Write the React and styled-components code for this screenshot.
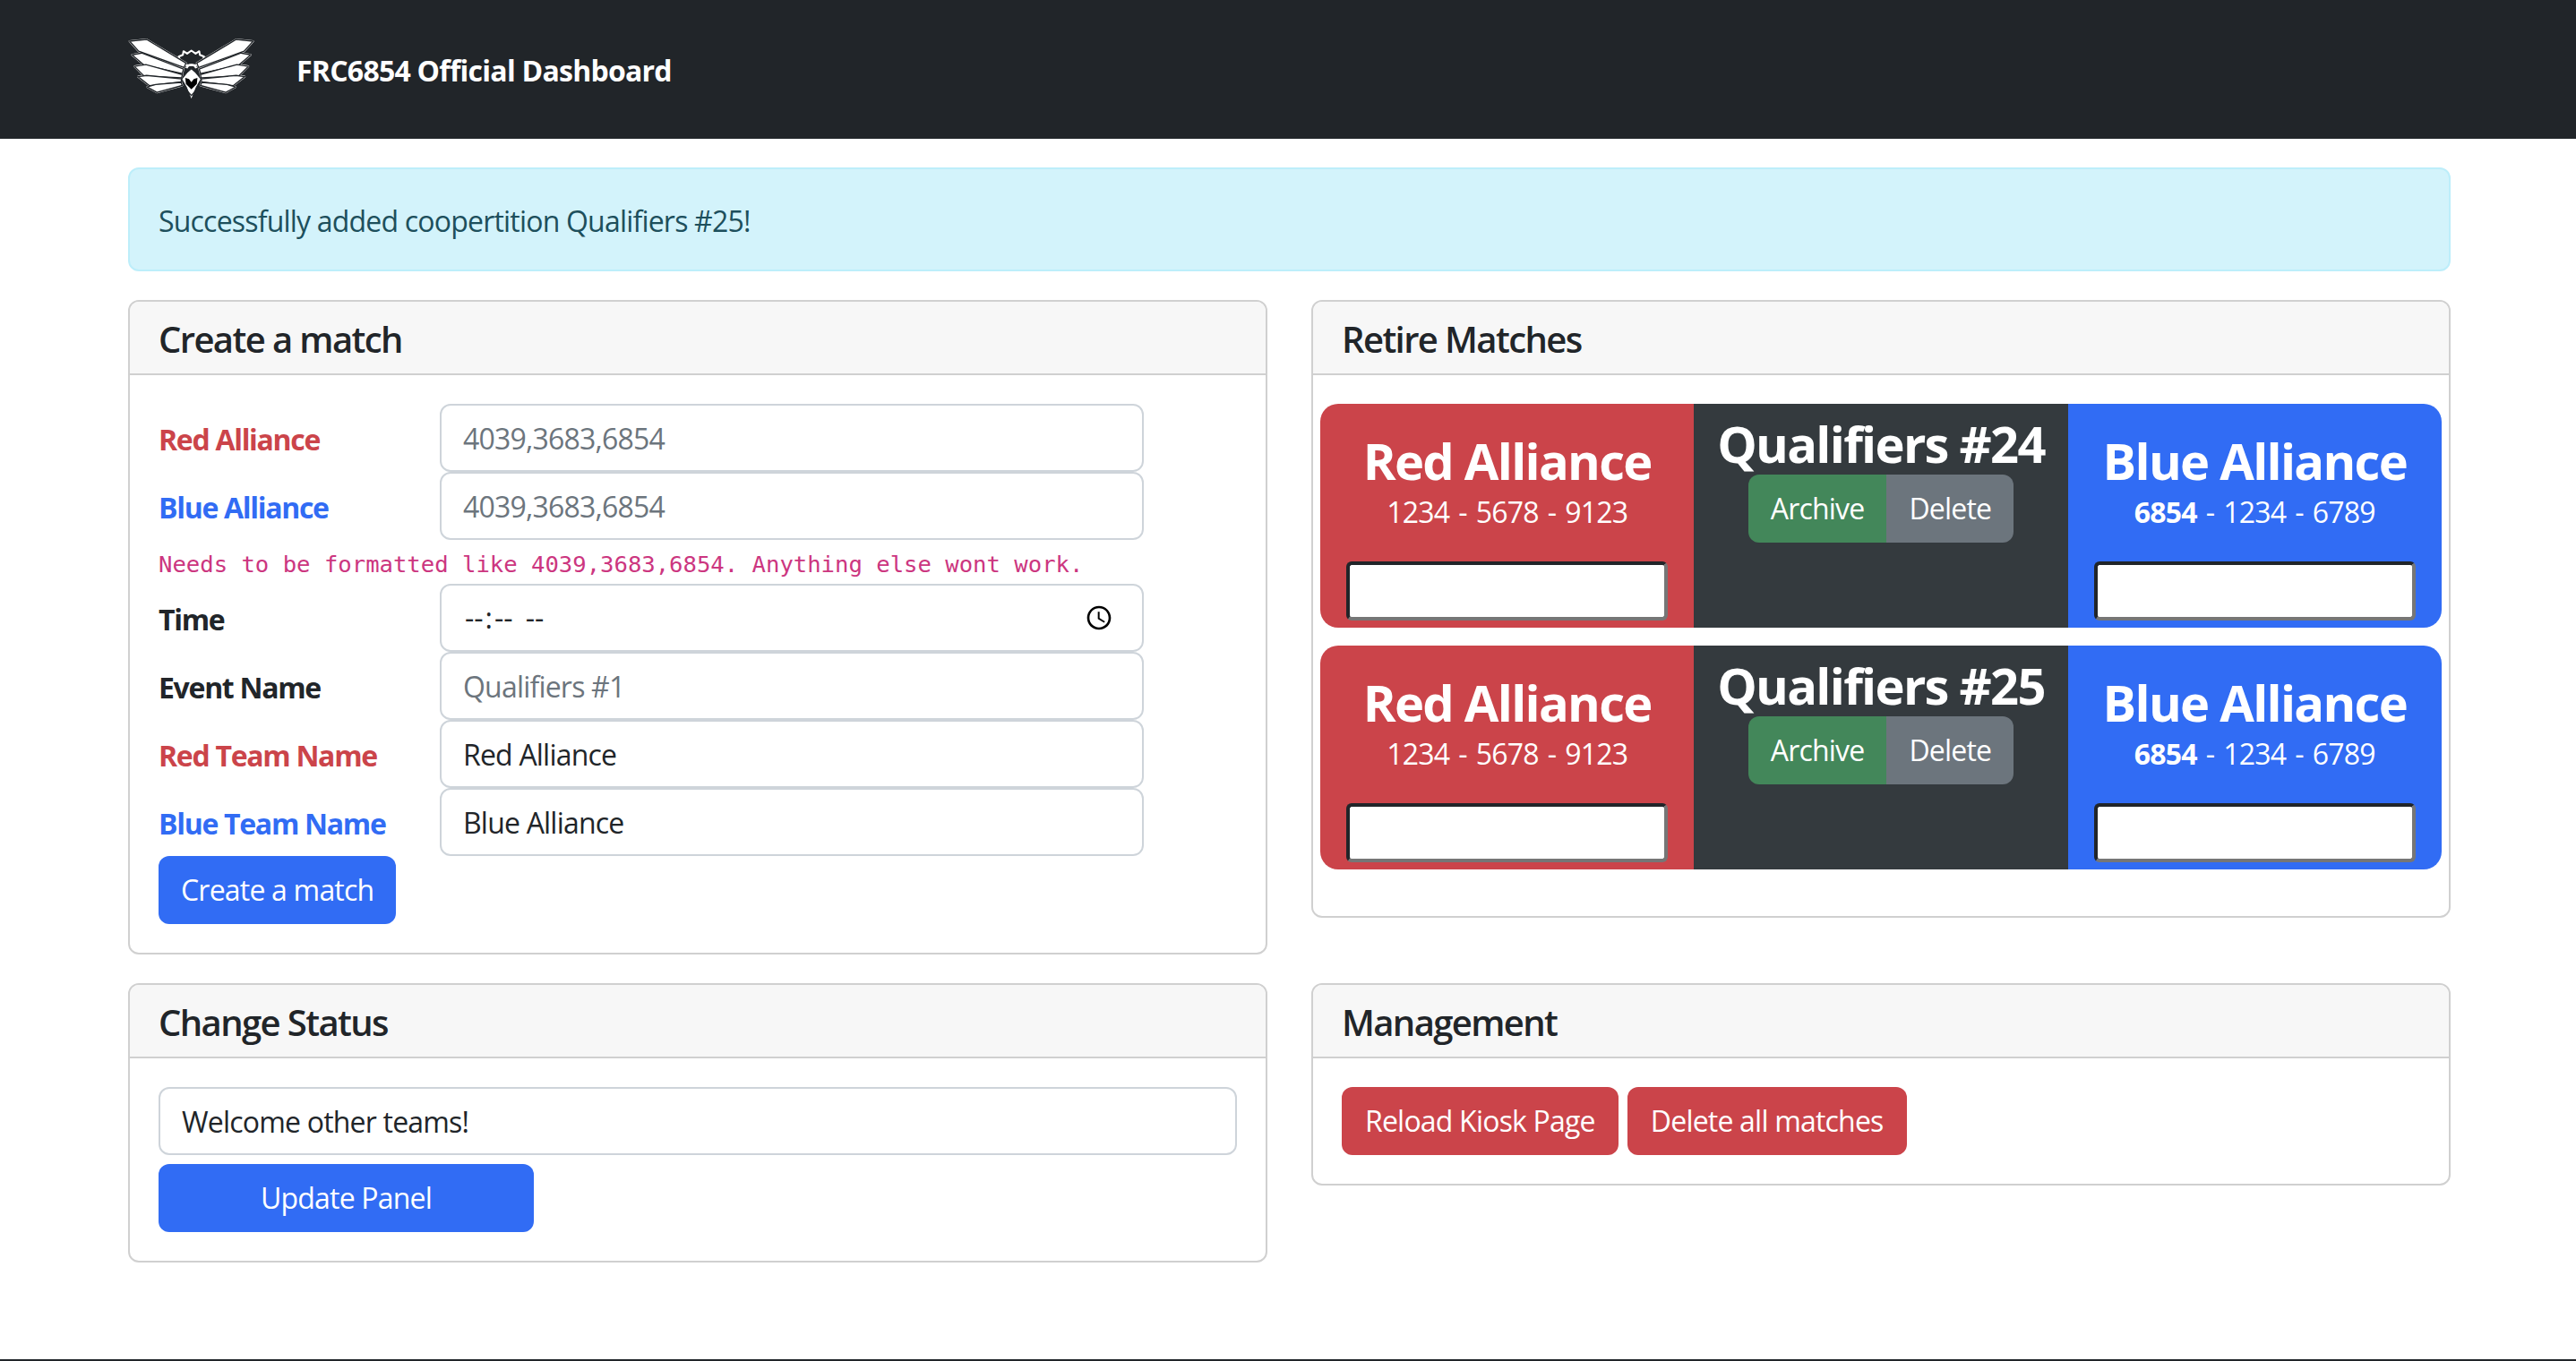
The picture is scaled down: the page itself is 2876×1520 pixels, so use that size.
import React from 'react'
import styled, { createGlobalStyle } from 'styled-components'

const RED = '#cb444a'
const BLUE = '#316cf4'
const INK = '#212529'
const tones = { red: RED, blue: BLUE, dark: INK, green: '#43875a', grey: '#6c757d' }

const GlobalStyle = createGlobalStyle`
    * {
        box-sizing: border-box;
    }

    html,
    body {
        margin: 0;
        height: 100%;
    }

    body {
        background: #fff;
        color: ${INK};
        font-family: 'Open Sans', 'Noto Sans', sans-serif;
        font-size: 32px;
        letter-spacing: -0.8px;
        line-height: 48px;
        overflow: hidden;
    }
`

const Page = styled.div`
    display: flex;
    flex-direction: column;
    height: 1520px;
`

const Navbar = styled.nav`
    flex: none;
    display: flex;
    align-items: center;
    gap: 46px;
    height: 155px;
    padding-left: 143px;
    background: ${INK};
`

const Brand = styled.a`
    padding-top: 2px;
    color: #fff;
    font-weight: 700;
    letter-spacing: -0.75px;
`

const Container = styled.main`
    width: 2593px;
    margin: 32px 0 0 143px;
`

const Alert = styled.div`
    height: 116px;
    margin-bottom: 32px;
    padding: 34px 32px 30px;
    border: 2px solid #bdeefa;
    border-radius: 12px;
    background: #d3f3fb;
    color: #1d4f5c;
`

const Grid = styled.div`
    display: grid;
    grid-template-columns: 1272px 1272px;
    gap: 32px 49px;
    align-items: start;
`

const Card = styled.section`
    border: 2px solid #d0d0d0;
    border-radius: 12px;
    overflow: hidden;
`

const CardHeader = styled.h5`
    margin: 0;
    padding: 18px 32px 14px;
    border-bottom: 2px solid #d0d0d0;
    background: #f7f7f7;
    font-size: 40px;
    font-weight: 600;
    line-height: 48px;
    letter-spacing: -1.6px;
`

const CardBody = styled.div`
    padding: 32px ${props => props.$inset || 32}px;
`

const FormRow = styled.label`
    display: flex;
    align-items: center;
    width: 1100px;
    height: 76px;
`

const FieldLabel = styled.span`
    flex: none;
    width: 314px;
    padding-top: 3px;
    color: ${props => tones[props.$tone || 'dark']};
    font-weight: 700;
    letter-spacing: -1.3px;
`

const Input = styled.input`
    display: block;
    flex: 1 1 auto;
    width: 100%;
    height: 76px;
    padding: 12px 24px;
    border: 2px solid #ced4da;
    border-radius: 12px;
    background: #fff;
    color: ${INK};
    font: inherit;
    letter-spacing: inherit;

    &::placeholder {
        color: #6c757d;
    }
`

const TimeInput = styled(Input)`
    &::-webkit-datetime-edit-hour-field,
    &::-webkit-datetime-edit-minute-field {
        padding: 0 2px;
        letter-spacing: 1px;
    }

    &::-webkit-datetime-edit-ampm-field {
        margin-left: 6px;
        padding: 0 2px;
        letter-spacing: 1px;
    }

    &::-webkit-calendar-picker-indicator {
        width: 32px;
        height: 32px;
        margin-right: 5px;
    }
`

const Hint = styled.code`
    display: block;
    height: 49px;
    padding-top: 4px;
    color: #cc3680;
    font-family: 'DejaVu Sans Mono', monospace;
    font-size: 25.6px;
    letter-spacing: 0;
    line-height: 46px;
`

const Button = styled.button`
    display: inline-block;
    width: ${props => (props.$width ? `${props.$width}px` : 'auto')};
    height: 76px;
    padding: 0 25px;
    border: 0;
    border-radius: 12px;
    background: ${props => tones[props.$tone]};
    color: #fff;
    font: inherit;
    letter-spacing: inherit;
`

const ButtonRow = styled.div`
    display: flex;
    gap: 10px;

    ${Button} {
        padding: 0 26px;
    }
`

const StatusForm = styled.div`
    display: flex;
    flex-direction: column;
    align-items: flex-start;
    gap: 10px;
`

const Match = styled.div`
    display: grid;
    grid-template-columns: repeat(3, 1fr);
    height: 250px;
    margin-bottom: 20px;
    border-radius: 20px;
    overflow: hidden;
    color: #fff;
`

const Alliance = styled.div`
    display: flex;
    flex-direction: column;
    align-items: center;
    padding-top: 30px;
    background: ${props => tones[props.$tone]};
`

const AllianceName = styled.h2`
    margin: 0;
    font-size: 56px;
    font-weight: 700;
    letter-spacing: -1.7px;
    line-height: 66px;
`

const Teams = styled.div`
    line-height: 48px;
    margin-top: 1px;
    word-spacing: 2.5px;
`

const ScoreInput = styled.input`
    width: 359px;
    height: 66px;
    margin-top: 31px;
    border: 4px solid;
    border-color: ${INK} #767676 #767676 ${INK};
    border-radius: 6px;
    background: #fff;
`

const Middle = styled.div`
    display: flex;
    flex-direction: column;
    align-items: center;
    padding-top: 11px;
    background: #343a3e;
`

const Group = styled.div`
    display: flex;
    margin-top: 2px;
    border-radius: 12px;
    overflow: hidden;
`

const GroupButton = styled(Button)`
    border-radius: 0;
`

const Footer = styled.footer`
    flex: none;
    height: 2px;
    margin-top: auto;
    background: ${INK};
`

const FEATHERS = [
    '44,45 100,39 230,117 224,132 74,78',
    '52,90 84,84 222,137 218,152 92,124',
    '60,128 98,122 218,155 216,166 92,160',
    '72,162 100,158 216,169 214,179 110,192',
    '102,196 130,188 214,181 218,191 134,214'
]

const Wing = () => (
    <g>
        {FEATHERS.map(points => (
            <polygon key={points} points={points} fill="#fff" stroke="#fff" strokeWidth="6" strokeLinejoin="round" />
        ))}
        {FEATHERS.map(points => (
            <polygon key={points} points={points} fill="#fff" stroke={INK} strokeWidth="4" />
        ))}
    </g>
)

const Logo = () => (
    <svg width="142" height="69" viewBox="40 36 418 204" aria-label="Team logo">
        <path
            d="M206 96 L220 90 L222 78 L234 86 L248 76 L262 86 L274 78 L276 90 L290 96 L280 124 L216 124 Z"
            fill={INK}
            stroke="#fff"
            strokeWidth="6"
            strokeLinejoin="round"
        />
        <path d="M232 134 a17 17 0 0 1 32 0" fill="none" stroke="#fff" strokeWidth="7" />
        <Wing />
        <g transform="translate(496 0) scale(-1 1)">
            <Wing />
        </g>
        <polygon points="248,136 262,148 280,170 264,198 248,238 232,198 216,170 234,148" fill="#fff" stroke={INK} strokeWidth="3" />
        <polygon points="228,166 240,170 248,180 256,170 268,166 266,186 248,204 230,186" fill="#000" />
        <path d="M226 200 L248 224 L270 200" fill="none" stroke={INK} strokeWidth="4" />
    </svg>
)

const MatchCard = ({ title }) => (
    <Match>
        <Alliance $tone="red">
            <AllianceName>Red Alliance</AllianceName>
            <Teams>1234 - 5678 - 9123</Teams>
            <ScoreInput />
        </Alliance>
        <Middle>
            <AllianceName>{title}</AllianceName>
            <Group>
                <GroupButton $tone="green">Archive</GroupButton>
                <GroupButton $tone="grey">Delete</GroupButton>
            </Group>
        </Middle>
        <Alliance $tone="blue">
            <AllianceName>Blue Alliance</AllianceName>
            <Teams>
                <strong>6854</strong> - 1234 - 6789
            </Teams>
            <ScoreInput />
        </Alliance>
    </Match>
)

export default function App() {
    return (
        <Page>
            <GlobalStyle />
            <Navbar>
                <Logo />
                <Brand>FRC6854 Official Dashboard</Brand>
            </Navbar>
            <Container>
                <Alert>Successfully added coopertition Qualifiers #25!</Alert>
                <Grid>
                    <Card>
                        <CardHeader>Create a match</CardHeader>
                        <CardBody>
                            <FormRow>
                                <FieldLabel $tone="red">Red Alliance</FieldLabel>
                                <Input placeholder="4039,3683,6854" />
                            </FormRow>
                            <FormRow>
                                <FieldLabel $tone="blue">Blue Alliance</FieldLabel>
                                <Input placeholder="4039,3683,6854" />
                            </FormRow>
                            <Hint>Needs to be formatted like 4039,3683,6854. Anything else wont work.</Hint>
                            <FormRow>
                                <FieldLabel>Time</FieldLabel>
                                <TimeInput type="time" />
                            </FormRow>
                            <FormRow>
                                <FieldLabel>Event Name</FieldLabel>
                                <Input placeholder="Qualifiers #1" />
                            </FormRow>
                            <FormRow>
                                <FieldLabel $tone="red">Red Team Name</FieldLabel>
                                <Input defaultValue="Red Alliance" />
                            </FormRow>
                            <FormRow>
                                <FieldLabel $tone="blue">Blue Team Name</FieldLabel>
                                <Input defaultValue="Blue Alliance" />
                            </FormRow>
                            <Button $tone="blue">Create a match</Button>
                        </CardBody>
                    </Card>
                    <Card>
                        <CardHeader>Retire Matches</CardHeader>
                        <CardBody $inset={8}>
                            <MatchCard title="Qualifiers #24" />
                            <MatchCard title="Qualifiers #25" />
                        </CardBody>
                    </Card>
                    <Card>
                        <CardHeader>Change Status</CardHeader>
                        <CardBody>
                            <StatusForm>
                                <Input defaultValue="Welcome other teams!" />
                                <Button $tone="blue" $width={419}>
                                    Update Panel
                                </Button>
                            </StatusForm>
                        </CardBody>
                    </Card>
                    <Card>
                        <CardHeader>Management</CardHeader>
                        <CardBody>
                            <ButtonRow>
                                <Button $tone="red">Reload Kiosk Page</Button>
                                <Button $tone="red">Delete all matches</Button>
                            </ButtonRow>
                        </CardBody>
                    </Card>
                </Grid>
            </Container>
            <Footer />
        </Page>
    )
}
